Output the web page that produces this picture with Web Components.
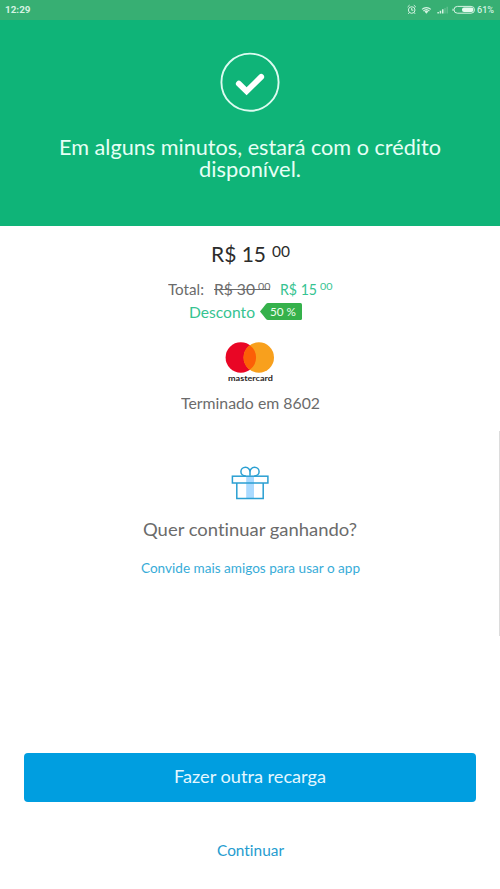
<!DOCTYPE html>
<html lang="pt-BR">
<head>
<meta charset="utf-8">
<title>Recarga</title>
<style>
html,body{margin:0;padding:0}
body{background:#fff;font-family:Lato,"Liberation Sans",sans-serif;width:500px;height:889px;overflow:hidden}
</style>
</head>
<body>
<recharge-screen></recharge-screen>
<script>
const define = (name, html, setup) => customElements.define(name, class extends HTMLElement {
  connectedCallback() {
    if (this.shadowRoot) return;
    const t = document.createElement('template');
    t.innerHTML = html;
    this.attachShadow({mode: 'open'}).append(t.content.cloneNode(true));
    if (setup) setup(this, this.shadowRoot);
  }
});

/* A single line of text widened or narrowed to fill a given width. */
define('fit-text', `<style>
  :host{display:block;white-space:nowrap;flex:none;text-align:left;font-variant-ligatures:none}
  span{display:inline-block;transform-origin:0 50%}
  </style><span><slot></slot></span>`, (host, root) => {
  const span = root.querySelector('span');
  const target = +host.getAttribute('width');
  host.style.fontSize = host.getAttribute('size') + 'px';
  host.style.lineHeight = host.getAttribute('line') + 'px';
  host.style.height = host.getAttribute('line') + 'px';
  host.style.width = target + 'px';
  span.style.transform = 'scaleX(' + target / span.getBoundingClientRect().width + ')';
});

define('status-bar', `<style>
  :host{display:flex;height:20px;background:#37af73;color:#d5f3e2;align-items:center;padding:0 6px 0 5px;box-sizing:border-box;font-family:Roboto,sans-serif;font-weight:500}
  .sp{flex:1}
  svg{display:block;flex:none}
  .time{font-weight:700}
  </style>
  <fit-text class="time" size="9.5" line="20" width="25.5">12:29</fit-text><div class="sp"></div>
  <svg width="72" height="20" viewBox="0 0 72 20" fill="none" stroke="#d5f3e2">
    <circle cx="6.7" cy="10" r="3.3"/><path d="M6.7 7.8v2.4h1.7M2.6 7l2-1.9M10.8 7l-2-1.9M4.3 12.6l-1 1.2M9.1 12.6l1 1.2"/>
    <g stroke="none" fill="#d5f3e2"><path d="M21.4 13.8l-1.9-2.4a3 3 0 0 1 3.8 0z"/></g>
    <path d="M17 9.3a6.5 6.5 0 0 1 8.8 0M18.4 11a4.5 4.5 0 0 1 6 0" stroke-width="1.1"/>
    <g stroke="none" fill="#d5f3e2"><path d="M32.4 12h1.5v1.5h-1.5zM34.7 10.8h1.5v2.7h-1.5zM37 9.2h1.5v4.3H37z"/><path d="M39.4 8h1.2v5.5h-1.2zM41.6 6.7h1.2v6.8h-1.2z" opacity=".3"/></g>
    <rect x="49" y="6.4" width="20.5" height="6.8" rx="3.4"/><rect x="57" y="7.6" width="11.4" height="4.4" rx="2" fill="#e6fbef" stroke="none"/><path d="M48 8.7v2.2"/>
  </svg>
  <fit-text size="9" line="20" width="17">61%</fit-text>`);

define('success-header', `<style>
  :host{display:flex;flex-direction:column;align-items:center;height:206px;background:#0fb478;color:#e6fff5}
  svg{display:block;margin:32px 0 24px}
  </style>
  <svg width="60" height="60" viewBox="0 0 60 60" fill="none">
    <circle cx="30" cy="30.2" r="28.6" stroke="#dcfbf0" stroke-width="1.9"/>
    <path d="M18.8 31.7L26.6 39.3L41.2 24.9" stroke="#fff" stroke-width="5.8" stroke-linecap="round" stroke-linejoin="miter"/>
  </svg>
  <slot></slot>`);

define('price-tag', `<style>
  :host{display:inline-flex;align-items:flex-start;flex:none;position:relative}
  ::slotted([slot=cents]){margin-left:var(--gap,3px)}
  :host([struck])::after{content:"";position:absolute;left:0;right:0;top:11px;height:1px;background:currentColor}
  </style><slot></slot><slot name="cents"></slot>`);

define('discount-badge', `<style>
  :host{display:block;flex:none;position:relative;width:42px;height:17px;color:#effff0}
  svg{display:block}
  .t{position:absolute;left:10.5px;top:0}
  </style>
  <svg width="42" height="17" viewBox="0 0 42 17"><path d="M0 8.5L6 1Q6.8 0 8 0H40.5Q42 0 42 1.5V15.5Q42 17 40.5 17H8Q6.8 17 6 16Z" fill="#35b14b"/></svg>
  <div class="t"><slot></slot></div>`);

define('mastercard-logo', `<style>
  :host{display:flex;flex-direction:column;align-items:center;color:#2b2625;font-weight:700}
  svg{display:block}
  </style>
  <svg width="50" height="31" viewBox="0 0 50 31">
    <circle cx="15.8" cy="15.5" r="15.2" fill="#e90625"/><circle cx="33.8" cy="15.5" r="15.2" fill="#f8a01d"/>
    <path d="M24.8 3.2a15.2 15.2 0 0 1 0 24.6a15.2 15.2 0 0 1 0-24.6z" fill="#fc5f07"/>
  </svg>
  <fit-text size="8" line="10" width="45">mastercard</fit-text>`);

define('gift-icon', `<style>:host{display:block}svg{display:block}</style>
  <svg width="38" height="36" viewBox="0 0 38 36" fill="none" stroke="#2a9fd2" stroke-width="1.5">
    <rect x="15.2" y="11.6" width="7.8" height="22" fill="#aadaff" stroke="none"/>
    <rect x="1.4" y="11.2" width="35.5" height="6.8"/>
    <path d="M5.8 18V33.4H32.2V18"/>
    <path d="M19 10.8V7.2C19 4.4 17.2 2.3 14.5 2.3S9.9 4.4 9.9 6.7S12 10.9 14.8 11M19 7.2C19 4.4 20.8 2.3 23.5 2.3S28.1 4.4 28.1 6.7S26 10.9 23.2 11"/>
  </svg>`);

define('action-button', `<style>
  :host{display:block}
  button{display:flex;justify-content:center;align-items:flex-start;width:100%;border:0;padding:0;margin:0;font:inherit;background:none;color:#259ccf}
  :host([primary]) button{background:#009ee0;color:#e4f7ff;border-radius:4px;height:49px}
  </style><button type="button"><slot></slot></button>`);

define('scroll-thumb', `<style>:host{position:absolute;right:0;top:431px;width:1.5px;height:205px;background:#dcdcdc}</style>`);

define('recharge-screen', `<style>
  :host{display:flex;flex-direction:column;width:500px;height:889px;position:relative;background:#fff}
  main{display:flex;flex-direction:column;align-items:center;flex:1;color:#6b6b6b}
  .row{display:flex;align-items:flex-start;justify-content:center}
  .amount{margin-top:15px;color:#2c2c2c;--gap:6px}
  .total{margin-top:11px}
  .green{color:#36c391}
  .total price-tag{margin-left:9.5px}
  .desc{margin-top:3px;gap:5px;padding-right:10px;box-sizing:border-box}
  mastercard-logo{margin-top:21px}
  .end{margin-top:10px}
  gift-icon{margin-top:52px}
  .ask{margin-top:17px}
  .invite{margin-top:18px;color:#38acd8}
  footer{display:flex;flex-direction:column;padding:0 24px 27px;gap:36px}
  </style>
  <status-bar></status-bar>
  <success-header>
    <fit-text size="20.5" line="22" width="382">Em alguns minutos, estará com o crédito</fit-text>
    <fit-text size="20.5" line="22" width="102">disponível.</fit-text>
  </success-header>
  <main>
    <div class="row amount"><price-tag><fit-text size="22" line="26" width="55">R$ 15</fit-text><fit-text slot="cents" size="15" line="20" width="18">00</fit-text></price-tag></div>
    <div class="row total">
      <fit-text size="15" line="22" width="36">Total:</fit-text>
      <price-tag struck><fit-text size="15" line="22" width="41">R$ 30</fit-text><fit-text slot="cents" size="9.5" line="18" width="12.5">00</fit-text></price-tag>
      <price-tag class="green"><fit-text size="15" line="22" width="37">R$ 15</fit-text><fit-text slot="cents" size="9.5" line="18" width="12.5">00</fit-text></price-tag>
    </div>
    <div class="row desc"><fit-text class="green" size="15.5" line="18" width="66">Desconto</fit-text><discount-badge><fit-text size="11.5" line="17" width="26">50 %</fit-text></discount-badge></div>
    <mastercard-logo></mastercard-logo>
    <fit-text class="end" size="15.5" line="20" width="139">Terminado em 8602</fit-text>
    <gift-icon></gift-icon>
    <fit-text class="ask" size="18" line="22" width="214">Quer continuar ganhando?</fit-text>
    <fit-text class="invite" size="13" line="20" width="219">Convide mais amigos para usar o app</fit-text>
  </main>
  <footer>
    <action-button primary><fit-text size="17" line="48" width="152">Fazer outra recarga</fit-text></action-button>
    <action-button><fit-text size="15.5" line="24" width="67">Continuar</fit-text></action-button>
  </footer>
  <scroll-thumb></scroll-thumb>`);
</script>
</body>
</html>
